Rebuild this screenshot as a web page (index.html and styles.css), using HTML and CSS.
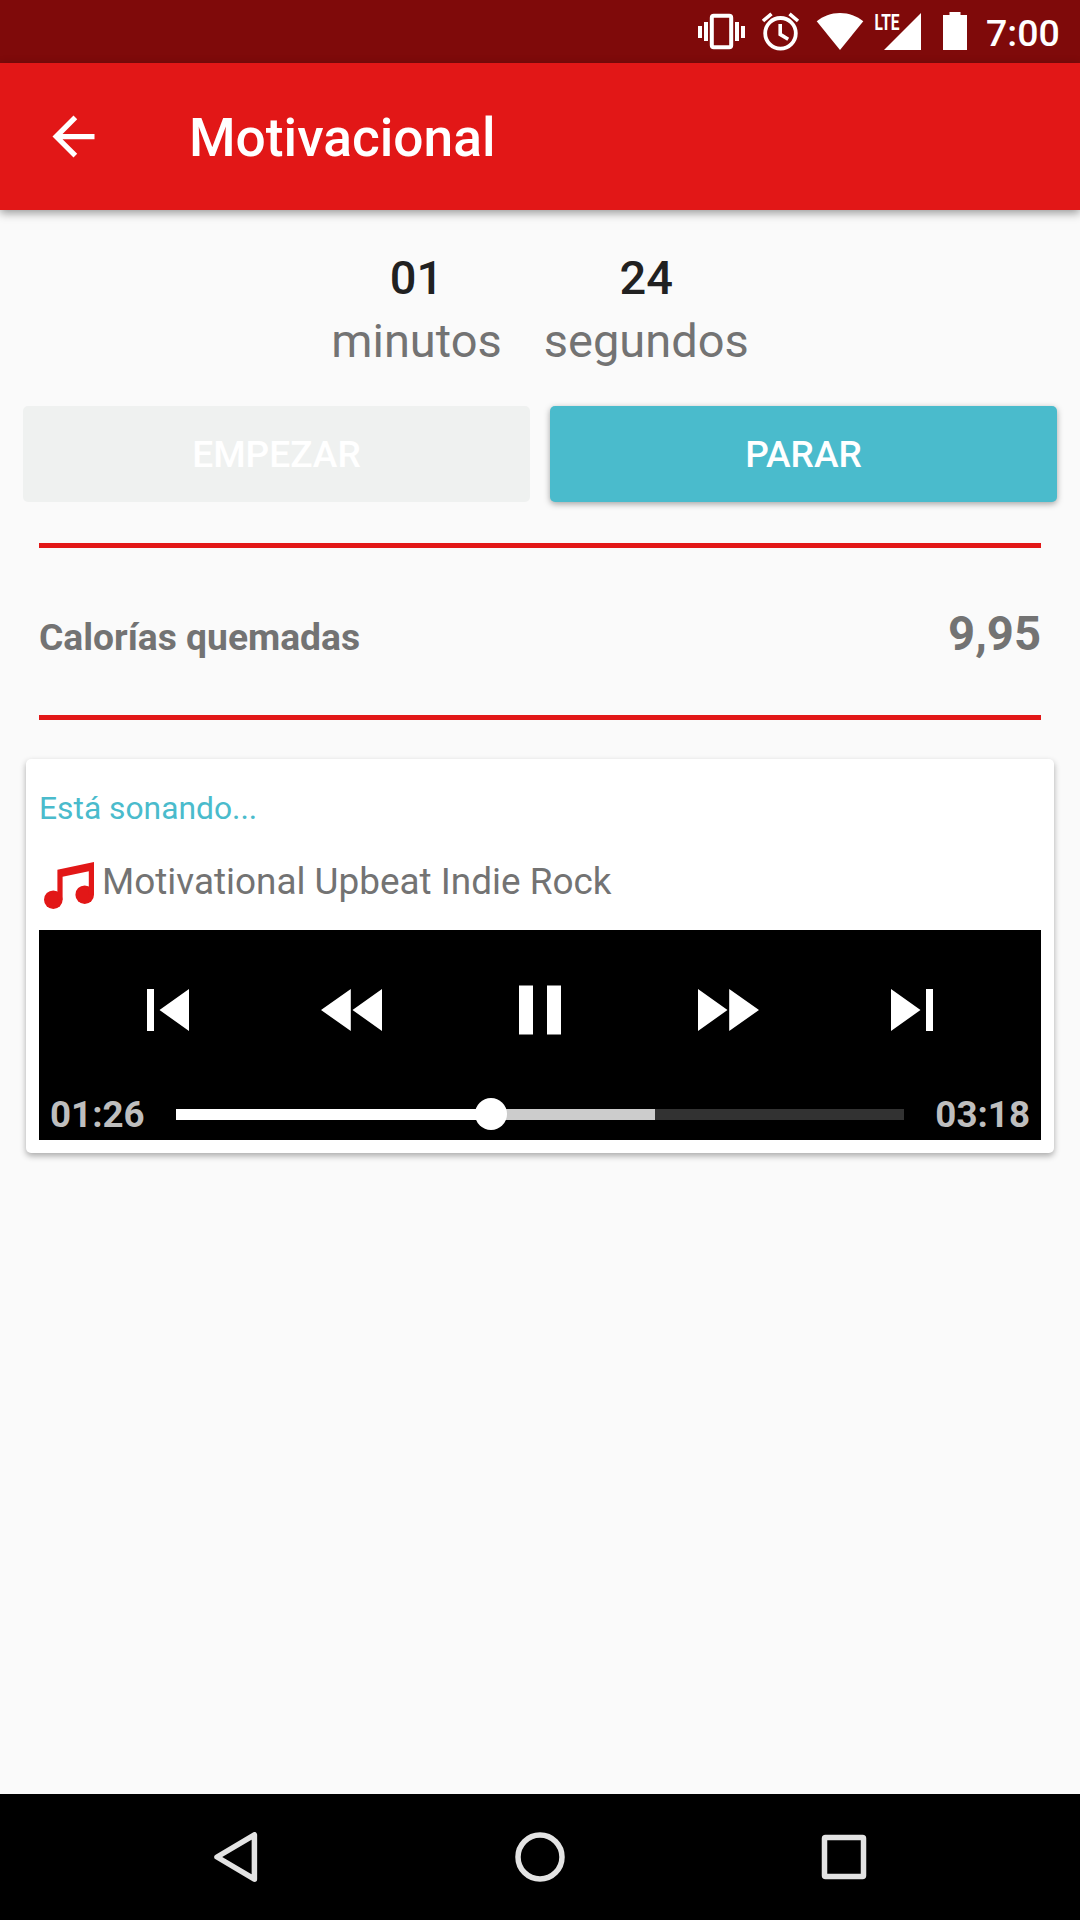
FILE: index.html
```
<!DOCTYPE html>
<html lang="es">
<head>
    <meta charset="UTF-8">
    <meta name="viewport" content="width=device-width, initial-scale=1.0">
    <title>Motivacional</title>
    <link rel="stylesheet" href="styles.css">
</head>
<body>
    <div class="screen">
        <div class="status-bar">
            <svg class="status-icons" width="270" height="40" viewBox="698 11 270 40" fill="#fff">
                <!-- vibrate -->
                <path d="M698 26h4v12h-4zM704 22h4v19h-4zM735 22h4v19h-4zM741 26h4v12h-4z"/>
                <rect x="711.8" y="15.8" width="19.4" height="31.4" rx="2" fill="none" stroke="#fff" stroke-width="4"/>
                <!-- alarm -->
                <circle cx="780.5" cy="33.3" r="15.3" fill="none" stroke="#fff" stroke-width="3.8"/>
                <path d="M780.2 24v10.400l8 4.800M763 21l8.500-7.200M798 21l-8.500-7.200" fill="none" stroke="#fff" stroke-width="3.6"/>
                <!-- wifi -->
                <path d="M840 50L816.700 21.300C823 16.200 831 13 840 13s17 3.200 23.300 8.300z"/>
                <!-- signal -->
                <path d="M921 13v37h-37z"/>
                <text class="lte" x="874.500" y="29.500" textLength="25" lengthAdjust="spacingAndGlyphs">LTE</text>
                <!-- battery -->
                <path d="M949.500 12h11v3h6.500v35h-24V15h6.500z"/>
            </svg>
            <span class="clock">7:00</span>
        </div>

        <header class="toolbar">
            <svg class="back" viewBox="0 0 24 24" fill="#fff">
                <path d="M20 11H7.830l5.590-5.590L12 4l-8 8 8 8 1.410-1.410L7.830 13H20v-2z"/>
            </svg>
            <h1>Motivacional</h1>
        </header>

        <main>
            <div class="timer">
                <div class="time-unit">
                    <strong>01</strong>
                    <span>minutos</span>
                </div>
                <div class="time-unit">
                    <strong>24</strong>
                    <span>segundos</span>
                </div>
            </div>

            <div class="buttons">
                <button class="btn" disabled>EMPEZAR</button>
                <button class="btn btn-stop">PARAR</button>
            </div>

            <div class="calories">
                <span class="calories-label">Calorías quemadas</span>
                <span class="calories-value">9,95</span>
            </div>

            <section class="card">
                <p class="playing">Está sonando...</p>
                <div class="song">
                    <svg class="note" width="50" height="48" viewBox="0 0 50 48" fill="#e21717">
                        <circle cx="9.300" cy="37.700" r="9.300"/>
                        <circle cx="40.700" cy="32.700" r="9.300"/>
                        <path d="M13.400 7.700L50 0v32.700h-5.200V9.200L18.600 14.800v22.900h-5.200z"/>
                    </svg>
                    <span>Motivational Upbeat Indie Rock</span>
                </div>

                <div class="player">
                    <div class="controls">
                        <svg width="42" height="42" viewBox="0 0 42 42"><path d="M0 0h7v42H0zM42 0v42L12.500 21z"/></svg>
                        <svg class="rewind" width="61" height="42" viewBox="0 0 61 42"><path d="M29.800 0v42L0 21zM61 0v42L31.500 21z"/></svg>
                        <svg width="42" height="50" viewBox="0 0 42 50"><path d="M0 .4h14v49.200H0zM28 .4h14v49.200H28z"/></svg>
                        <svg class="forward" width="61" height="42" viewBox="0 0 61 42"><path d="M0 0l29.500 21L0 42zM31.200 0L61 21 31.200 42z"/></svg>
                        <svg width="42" height="42" viewBox="0 0 42 42"><path d="M0 0l29.500 21L0 42zM35 0h7v42h-7z"/></svg>
                    </div>
                    <div class="progress">
                        <span class="time">01:26</span>
                        <div class="track">
                            <div class="buffered" style="width: 65.8%"></div>
                            <div class="played" style="width: 43.3%"></div>
                            <div class="thumb" style="left: 43.3%"></div>
                        </div>
                        <span class="time">03:18</span>
                    </div>
                </div>
            </section>
        </main>

        <nav class="nav-bar">
            <svg width="50" height="50" viewBox="0 0 50 50"><path d="M43.400 2.800v44.400L6 25z"/></svg>
            <svg width="50" height="50" viewBox="0 0 50 50"><circle cx="25" cy="25" r="22"/></svg>
            <svg width="50" height="50" viewBox="0 0 50 50"><rect x="5.500" y="5.500" width="39" height="39" rx="1"/></svg>
        </nav>
    </div>
</body>
</html>
```

FILE: styles.css
```
* {
    margin: 0;
    padding: 0;
    box-sizing: border-box;
    font-family: Roboto, sans-serif;
}

body {
    background-color: #fafafa;
    color: #737373;
}

svg {
    display: block;
    flex-shrink: 0;
}

.screen {
    width: 1080px;
    height: 1920px;
    display: flex;
    flex-direction: column;
    overflow: hidden;
}

.status-bar {
    height: 63px;
    flex-shrink: 0;
    display: flex;
    align-items: flex-start;
    justify-content: flex-end;
    padding: 11px 21px 0 0;
    background-color: #7f0a0a;
}

.lte {
    font-family: Roboto, sans-serif;
    font-size: 22px;
    font-weight: 700;
}

.clock {
    width: 73px;
    margin-left: 18px;
    font-size: 37.5px;
    font-weight: 500;
    line-height: 44px;
    color: #fff;
}

.toolbar {
    height: 147px;
    flex-shrink: 0;
    display: flex;
    align-items: center;
    padding-left: 42px;
    background-color: #e21717;
    box-shadow: 0 3px 9px rgba(0,0,0,0.4);
}

.back {
    width: 63px;
    height: 63px;
}

h1 {
    margin-left: 84px;
    padding-top: 3px;
    font-size: 53.3px;
    font-weight: 500;
    line-height: 62px;
    color: #fff;
}

main {
    flex: 1;
}

.timer {
    display: flex;
    justify-content: center;
    gap: 42px;
    padding-top: 36px;
}

.time-unit {
    display: flex;
    flex-direction: column;
    align-items: center;
    font-size: 47px;
    line-height: 63px;
}

.time-unit strong {
    font-weight: 500;
    color: #212121;
}

.buttons {
    display: flex;
    gap: 20px;
    padding: 34px 23px 0;
}

.btn {
    flex: 1;
    height: 96px;
    padding-top: 1px;
    border: none;
    border-radius: 5px;
    background-color: #eff1f0;
    color: #fff;
    font-size: 37.1px;
    font-weight: 500;
}

.btn-stop {
    background-color: #4abbcc;
    box-shadow: 0 2px 6px rgba(0,0,0,0.35);
}

.calories {
    display: flex;
    justify-content: space-between;
    align-items: baseline;
    height: 177px;
    margin: 41px 39px 0;
    padding-top: 58px;
    border-top: 5px solid #e21717;
    border-bottom: 5px solid #e21717;
    font-weight: 700;
}

.calories-label {
    font-size: 37.2px;
}

.calories-value {
    font-size: 47.25px;
    line-height: 56px;
}

.card {
    margin: 39px 26px 0;
    padding: 28px 13px 13px;
    border-radius: 5px;
    background-color: #fff;
    box-shadow: 0 3px 6px rgba(0,0,0,0.32);
}

.playing {
    font-size: 31.8px;
    line-height: 42px;
    color: #4abbcc;
}

.song {
    display: flex;
    align-items: flex-start;
    height: 101px;
    padding: 33px 0 0 5px;
    font-size: 36.9px;
    line-height: 38px;
}

.song span {
    margin-left: 8px;
    margin-top: 1px;
}

.player {
    height: 210px;
    padding: 0 11px;
    background-color: #000;
}

.controls {
    display: grid;
    grid-template-columns: repeat(5, 186px);
    justify-content: center;
    justify-items: center;
    align-items: center;
    height: 160px;
    fill: #fff;
}

.rewind {
    margin-right: 5px;
}

.forward {
    margin-left: 5px;
}

.progress {
    display: flex;
    align-items: center;
    justify-content: space-between;
    height: 49px;
}

.time {
    font-size: 36.75px;
    font-weight: 700;
    line-height: 44px;
    color: #bebebe;
}

.track {
    position: relative;
    width: 728px;
    height: 11px;
    background-color: #323232;
}

.buffered, .played {
    position: absolute;
    top: 0;
    left: 0;
    height: 100%;
}

.buffered {
    background-color: #ccc;
}

.played {
    background-color: #fff;
}

.thumb {
    position: absolute;
    top: 5px;
    width: 32px;
    height: 32px;
    border-radius: 50%;
    background-color: #fff;
    transform: translate(-50%, -50%);
}

.nav-bar {
    display: flex;
    align-items: center;
    justify-content: center;
    gap: 254px;
    height: 126px;
    background-color: #000;
    fill: none;
    stroke: #e3e3e3;
    stroke-width: 5.5;
    stroke-linejoin: round;
}
```
